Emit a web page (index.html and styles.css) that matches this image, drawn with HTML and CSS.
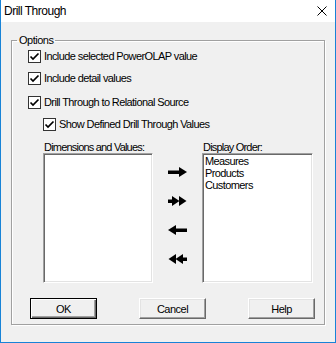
FILE: index.html
```
<!DOCTYPE html>
<html lang="en">
<head>
  <meta charset="UTF-8" />
  <title>Drill Through</title>
  <link rel="stylesheet" href="styles.css">
</head>
<body>
  <div class="window">
    <!-- title bar -->
    <div class="titlebar">
      <span class="title">Drill Through</span>
      <svg class="close" width="10" height="10" viewBox="0 0 10 10">
        <path d="M0.5 0.5 L9.5 9.5 M9.5 0.5 L0.5 9.5" stroke="#000" stroke-width="1" />
      </svg>
    </div>

    <div class="content">
      <fieldset class="group">
        <legend>Options</legend>

        <label class="check row-1">
          <span class="box"><svg width="11" height="11" viewBox="0 0 11 11"><polyline points="1.5,5.5 4,8 9.5,2.5" fill="none" stroke="#000" stroke-width="1.7" /></svg></span>
          Include selected PowerOLAP value
        </label>
        <label class="check row-2">
          <span class="box"><svg width="11" height="11" viewBox="0 0 11 11"><polyline points="1.5,5.5 4,8 9.5,2.5" fill="none" stroke="#000" stroke-width="1.7" /></svg></span>
          Include detail values
        </label>
        <label class="check row-3">
          <span class="box"><svg width="11" height="11" viewBox="0 0 11 11"><polyline points="1.5,5.5 4,8 9.5,2.5" fill="none" stroke="#000" stroke-width="1.7" /></svg></span>
          Drill Through to Relational Source
        </label>
        <label class="check row-4 indent">
          <span class="box"><svg width="11" height="11" viewBox="0 0 11 11"><polyline points="1.5,5.5 4,8 9.5,2.5" fill="none" stroke="#000" stroke-width="1.7" /></svg></span>
          Show Defined Drill Through Values
        </label>

        <!-- lists -->
        <div class="lists">
          <div class="list-label">Dimensions and Values:</div>
          <div></div>
          <div class="list-label">Display Order:</div>

          <div class="listbox"></div>

          <div class="arrows">
            <div class="arrow-btn">
              <svg width="19" height="10" viewBox="0 0 19 10"><rect x="0" y="3.5" width="12" height="3.5" /><polygon points="11,0 19,5 11,10" /></svg>
            </div>
            <div class="arrow-btn">
              <svg width="19" height="10" viewBox="0 0 19 10"><rect x="0" y="3.5" width="6" height="3.5" /><polygon points="4,0 11.5,5 4,10" /><polygon points="11,0 18.5,5 11,10" /></svg>
            </div>
            <div class="arrow-btn">
              <svg width="19" height="10" viewBox="0 0 19 10"><rect x="7" y="3.5" width="12" height="3.5" /><polygon points="8,0 0,5 8,10" /></svg>
            </div>
            <div class="arrow-btn">
              <svg width="19" height="10" viewBox="0 0 19 10"><rect x="13" y="3.5" width="6" height="3.5" /><polygon points="15,0 7.5,5 15,10" /><polygon points="8,0 0.5,5 8,10" /></svg>
            </div>
          </div>

          <div class="listbox">
            <div class="item">Measures</div>
            <div class="item">Products</div>
            <div class="item">Customers</div>
          </div>
        </div>

        <!-- buttons -->
        <div class="buttons">
          <button class="btn default">OK</button>
          <button class="btn">Cancel</button>
          <button class="btn">Help</button>
        </div>
      </fieldset>
    </div>
  </div>
</body>
</html>
```

FILE: styles.css
```
body {
  margin: 0;
  background-color: #ffffff;
  font-family: "Liberation Sans", Arial, sans-serif;
  font-size: 11px;
  color: #000;
}

/* whole dialog */
.window {
  width: 336px;
  height: 343px;
  box-sizing: border-box;
  border: 1px solid #1883d7;
  border-top: none;
  background-color: #f0f0f0;
}

/* title bar */
.titlebar {
  height: 22px;
  background-color: #ffffff;
  display: flex;
  align-items: center;
  justify-content: space-between;
  padding: 0 8px 0 3px;
}

.title {
  font-size: 12px;
  letter-spacing: -0.5px;
}

.close {
  display: block;
}

.content {
  padding: 12px 10px 0 10px;
}

/* group box */
.group {
  margin: 0;
  width: 314px;
  box-sizing: border-box;
  padding: 0 0 5px 16px;
  border: 1px solid #a0a0a0;
  box-shadow: inset 1px 1px 0 #ffffff, 1px 1px 0 #ffffff;
  min-inline-size: 0;
}

.group legend {
  padding: 0 2px;
  margin-left: -11px;
  line-height: 12px;
  letter-spacing: -0.5px;
}

/* checkboxes */
.check {
  display: flex;
  align-items: center;
  height: 13px;
  line-height: 13px;
  letter-spacing: -0.6px;
  white-space: nowrap;
}

.check.indent {
  padding-left: 15px;
}

.row-1 { margin-top: 4px; }
.row-2 { margin-top: 9px; }
.row-3 { margin-top: 11px; }
.row-4 { margin-top: 9px; }

.box {
  width: 13px;
  height: 13px;
  box-sizing: border-box;
  border: 1px solid #333333;
  background-color: #ffffff;
  margin-right: 3px;
  flex-shrink: 0;
}

.box svg {
  display: block;
}

/* list area */
.lists {
  display: grid;
  grid-template-columns: 110px 49px 111px;
  grid-template-rows: 12px 130px;
  margin-top: 10px;
  margin-left: 15px;
}

.list-label {
  line-height: 12px;
  padding-left: 1px;
  letter-spacing: -0.8px;
  white-space: nowrap;
}

.listbox {
  background-color: #ffffff;
  border: 1px solid;
  border-color: #a0a0a0 #ffffff #ffffff #a0a0a0;
  box-shadow: inset 1px 1px 0 #696969, inset -1px -1px 0 #e3e3e3;
  padding: 0 2px;
}

.item {
  line-height: 12px;
  letter-spacing: -0.6px;
}

.item:first-child {
  margin-top: 1px;
}

.arrows {
  display: flex;
  flex-direction: column;
  align-items: center;
  padding-top: 4px;
}

.arrow-btn {
  height: 29px;
  display: flex;
  align-items: center;
  justify-content: center;
  width: 100%;
}

.arrow-btn svg {
  display: block;
  fill: #000;
}

/* bottom buttons */
.buttons {
  display: flex;
  gap: 42px;
  margin-top: 15px;
  margin-left: 2px;
}

.btn {
  width: 67px;
  height: 21px;
  box-sizing: border-box;
  font-family: "Liberation Sans", Arial, sans-serif;
  font-size: 11px;
  letter-spacing: -0.5px;
  color: #000;
  background-color: #f0f0f0;
  border: 1px solid;
  border-color: #ffffff #696969 #696969 #ffffff;
  box-shadow: inset -1px -1px 0 #a0a0a0, inset 1px 1px 0 #e3e3e3;
  padding: 0;
}

.btn.default {
  border-color: #000;
  box-shadow: inset 1px 1px 0 #ffffff, inset -1px -1px 0 #696969, inset -2px -2px 0 #a0a0a0;
}
```
